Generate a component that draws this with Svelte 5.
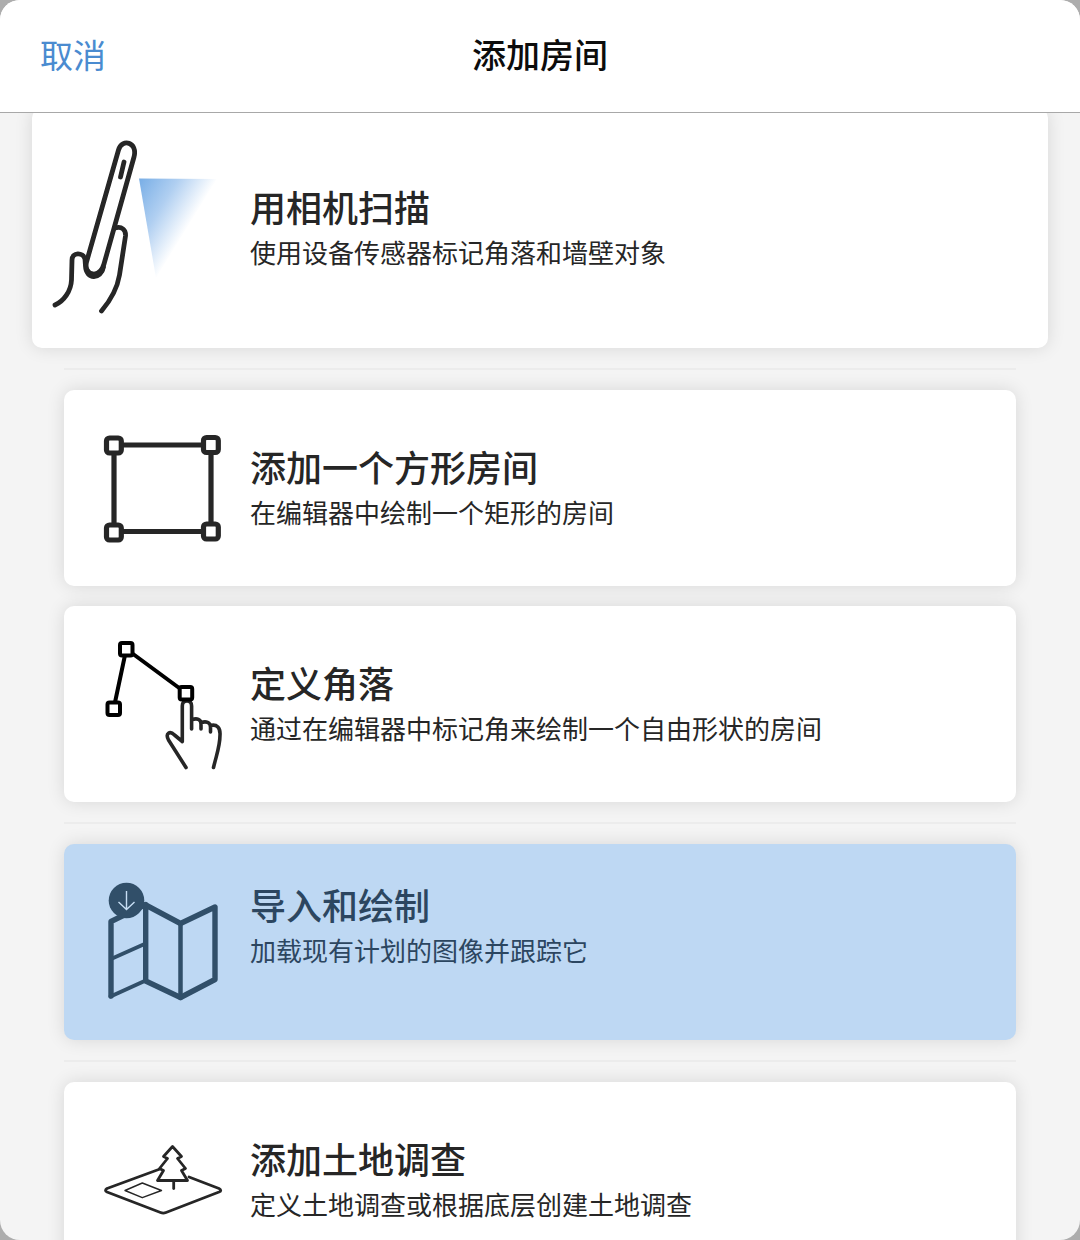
<script>
  const groups = [
    [{ id: 'scan', title: '用相机扫描', text: '使用设备传感器标记角落和墙壁对象' }],
    [
      { id: 'square', title: '添加一个方形房间', text: '在编辑器中绘制一个矩形的房间' },
      { id: 'corners', title: '定义角落', text: '通过在编辑器中标记角来绘制一个自由形状的房间' }
    ],
    [{ id: 'import', title: '导入和绘制', text: '加载现有计划的图像并跟踪它' }],
    [{ id: 'land', title: '添加土地调查', text: '定义土地调查或根据底层创建土地调查' }]
  ];
</script>

{#snippet icon(id)}
  {#if id === 'scan'}
    <svg class="icon large" viewBox="48 138 178 180" aria-hidden="true">
      <defs>
        <linearGradient id="beam" gradientUnits="userSpaceOnUse" x1="139" y1="179" x2="196" y2="214">
          <stop offset="0" stop-color="#78aee6" />
          <stop offset="0.5" stop-color="#b0cff1" />
          <stop offset="1" stop-color="#ffffff" />
        </linearGradient>
      </defs>
      <path d="M139 178.500 L217 179 L156 278 Z" fill="url(#beam)" />
      <g class="ink" stroke-width="4.800">
        <path d="M134 157 C138 142 122 138 118.500 150 L86.500 262 C85 269 88 273.500 93 274 C99 274.500 102 271 104 264 Z" />
        <path d="M124 162 L120.500 177" />
        <path d="M55 305 C64 301 71 291 71.500 280 L72 260 C72 252 83 252 85 259 L85.500 266 C86 280 101 280 103.500 267" />
        <path d="M86.500 269 C90 277 99 277 102.500 269" />
        <path d="M115 228 C122 226 126 230 125.500 236 L119.500 275 C117 290 110 301 101.500 311" />
      </g>
    </svg>
  {:else if id === 'square'}
    <svg class="icon" viewBox="102 418 124 140" aria-hidden="true">
      <g class="ink" stroke-width="5.200">
        <path d="M114 445 H211 V531.500 H114 Z" />
        <g class="node">
          <rect x="106.500" y="438" width="14.800" height="15" rx="3" />
          <rect x="203.500" y="437.500" width="14.800" height="15" rx="3" />
          <rect x="106.500" y="525" width="14.800" height="15" rx="3" />
          <rect x="203.500" y="524" width="14.800" height="15" rx="3" />
        </g>
      </g>
    </svg>
  {:else if id === 'corners'}
    <svg class="icon" viewBox="102 634 124 140" aria-hidden="true">
      <g class="ink" stroke-width="3.600">
        <path d="M186 767.500 L168.500 740 C165 733 170 730.500 174.500 735 L182.300 741.500 V706 Q182.300 701 187 701 Q191.600 701 191.600 706 V729" />
        <path d="M192 719.500 C197 718 201 719 201 724 V729 M201 722.500 C206 721 210.500 722 210.500 727 V732 M210.500 725.500 C217 724 220.500 728 220 735 C220 746 217 753 213.500 767.500" />
      </g>
      <g class="ink black" stroke-width="4">
        <path d="M113.700 708.500 L126.300 649 L186 693" />
        <g class="node">
          <rect x="120" y="643" width="12.500" height="12.500" rx="2" />
          <rect x="107.500" y="702.500" width="12.500" height="12.500" rx="2" />
          <rect x="179.700" y="687" width="12.500" height="12.500" rx="2" />
        </g>
      </g>
    </svg>
  {:else if id === 'import'}
    <svg class="icon" viewBox="102 872 124 140" aria-hidden="true">
      <g class="ink navy" stroke-width="5.400">
        <path d="M145.700 905 L180.500 923.500 L215 907 V979.500 L180.500 997.500 L145.700 981 Z" />
        <path d="M180.500 923.500 V998" stroke-width="4.500" />
        <path d="M145.700 904.500 L111 921.500 V996" />
        <path d="M110.500 996.500 L145.700 980.500" stroke-width="4" />
        <path d="M111 959 L145.700 943.500" stroke-width="3.800" />
      </g>
      <circle cx="126.500" cy="900.500" r="17.800" fill="#314f69" />
      <path d="M126.500 891 V909.500 M118.500 902 L126.500 909.500 L134.500 902" fill="none" stroke="#c7def4" stroke-width="1.400" />
    </svg>
  {:else}
    <svg class="icon" viewBox="102 1110 124 140" aria-hidden="true">
      <g class="ink" stroke-width="2.800">
        <path d="M160 1169 L107 1188.500 Q104 1190.500 107 1192 L160.500 1212.500 Q163.300 1213.700 166 1212.500 L219 1192 Q222.500 1190.500 219 1188.500 L189 1177" />
        <path d="M172.500 1146.500 L163.500 1156.500 L167.500 1158.500 L159.500 1168.500 L163.500 1170.500 L157.500 1180.500 H187.500 L181.500 1170.500 L185.500 1168.500 L177.500 1158.500 L181.500 1156.500 Z" />
        <path d="M173.700 1181 V1188.500" />
        <path d="M125 1190.500 L142.300 1183 L161.500 1190.500 L142.300 1197.700 Z" stroke-width="1.400" />
      </g>
    </svg>
  {/if}
{/snippet}

<div class="sheet">
  <header>
    <button class="cancel" type="button">取消</button>
    <h1>添加房间</h1>
  </header>
  <main>
    {#each groups as group, index}
      {#if index > 0}<hr />{/if}
      <div class="group">
        {#each group as item}
          <button type="button" class="card" class:featured={item.id === 'scan'} class:selected={item.id === 'import'}>
            {@render icon(item.id)}
            <span class="copy">
              <span class="title">{item.title}</span>
              <span class="text">{item.text}</span>
            </span>
          </button>
        {/each}
      </div>
    {/each}
  </main>
</div>

<style>
  :global(body) {
    margin: 0;
    background: #adadad;
  }
  .sheet {
    display: flex;
    flex-direction: column;
    height: 100vh;
    overflow: hidden;
    border-radius: 20px;
    background: #f4f4f4;
    font-family: 'Noto Sans CJK SC', sans-serif;
    color: #262626;
  }
  header {
    display: grid;
    grid-template-columns: 1fr auto 1fr;
    align-items: center;
    flex: none;
    box-sizing: border-box;
    height: 113px;
    padding: 0 40px 4px;
    border-bottom: 1px solid #a8a8a8;
    background: #fff;
    z-index: 1;
  }
  button {
    font: inherit;
    color: inherit;
    border: 0;
    padding: 0;
    cursor: pointer;
  }
  .cancel {
    justify-self: start;
    background: none;
    color: #4a8bd0;
    font-size: 33px;
    line-height: 48px;
  }
  h1 {
    margin: 0;
    color: #0c0c0c;
    font-size: 34px;
    font-weight: 500;
    line-height: 48px;
  }
  main {
    flex: 1;
    min-height: 0;
    margin-top: -5px;
    padding: 0 64px;
    overflow: hidden;
  }
  .group {
    display: flex;
    flex-direction: column;
    gap: 20px;
  }
  hr {
    height: 2px;
    margin: 20px 0;
    border: 0;
    background: #ececec;
  }
  .card {
    display: flex;
    align-items: center;
    gap: 24px;
    min-height: 196px;
    padding: 0 38px;
    border-radius: 10px;
    background: #fff;
    box-shadow: 0 0 18px rgba(0, 0, 0, 0.12);
    text-align: left;
  }
  .featured {
    min-height: 240px;
    margin: 0 -32px;
    padding: 0 16px;
  }
  .selected {
    background: #bed8f3;
    color: #2c4660;
  }
  .icon {
    flex: none;
    width: 124px;
    height: 140px;
  }
  .icon.large {
    width: 178px;
    height: 180px;
  }
  .ink {
    fill: none;
    stroke: #262626;
    stroke-linecap: round;
    stroke-linejoin: round;
  }
  .black {
    stroke: #000;
  }
  .navy {
    stroke: #314f69;
  }
  .node {
    fill: #fff;
  }
  .copy {
    display: flex;
    flex-direction: column;
    padding-bottom: 4px;
  }
  .selected .copy {
    padding-bottom: 36px;
  }
  .title {
    font-size: 36px;
    font-weight: 500;
    line-height: 52px;
  }
  .text {
    font-size: 26px;
    line-height: 40px;
  }
</style>
